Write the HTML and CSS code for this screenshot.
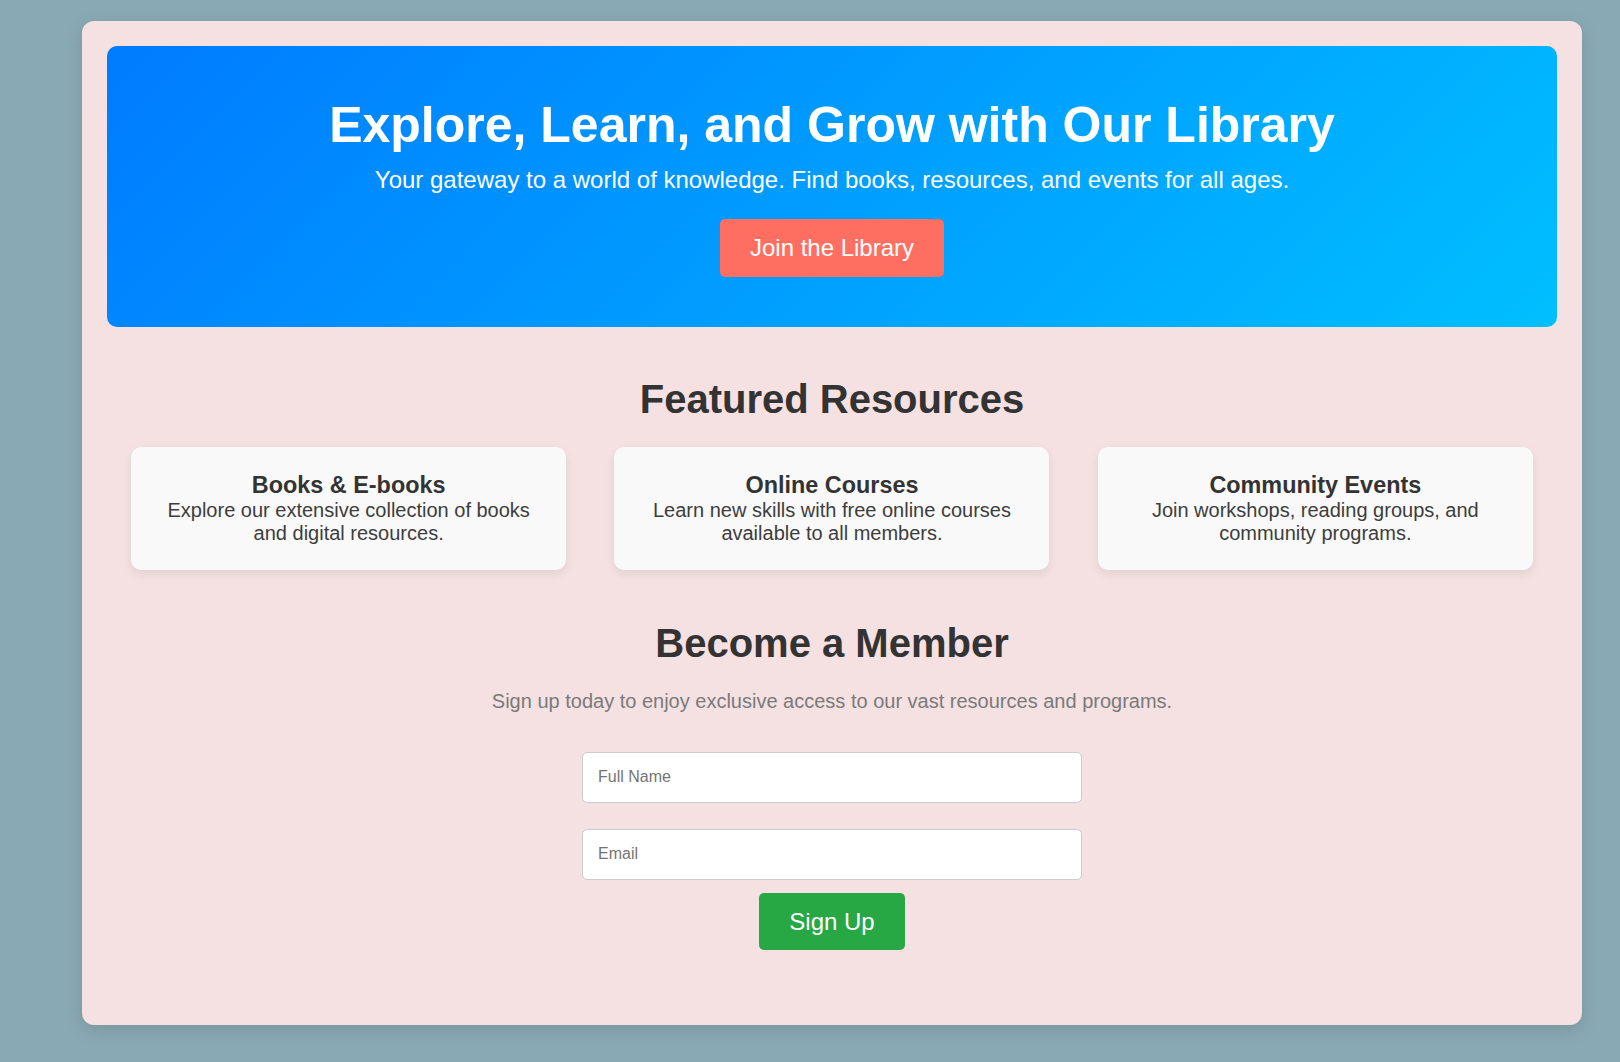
FILE: index.html
```html
<!DOCTYPE html>
<html lang="en">
<head>
<meta charset="utf-8">
<title>Library</title>
<link rel="stylesheet" href="styles.css">
</head>
<body>
<div class="container">
  <header class="hero">
    <h1 class="hero-title">Explore, Learn, and Grow with Our Library</h1>
    <p class="hero-sub">Your gateway to a world of knowledge. Find books, resources, and events for all ages.</p>
    <a class="btn-join" href="#">Join the Library</a>
  </header>

  <section class="featured">
    <h2 class="section-title">Featured Resources</h2>
    <div class="cards">
      <div class="card">
        <h3 class="card-title">Books &amp; E-books</h3>
        <p class="card-text">Explore our extensive collection of books and digital resources.</p>
      </div>
      <div class="card">
        <h3 class="card-title">Online Courses</h3>
        <p class="card-text">Learn new skills with free online courses available to all members.</p>
      </div>
      <div class="card">
        <h3 class="card-title">Community Events</h3>
        <p class="card-text">Join workshops, reading groups, and community programs.</p>
      </div>
    </div>
  </section>

  <section class="member">
    <h2 class="section-title">Become a Member</h2>
    <p class="member-text">Sign up today to enjoy exclusive access to our vast resources and programs.</p>
    <form class="signup">
      <input class="field" type="text" placeholder="Full Name">
      <input class="field field-second" type="email" placeholder="Email">
      <button class="btn-signup" type="button">Sign Up</button>
    </form>
  </section>
</div>
</body>
</html>
```

FILE: styles.css
```css
html, body {
  margin: 0;
  padding: 0;
}

body {
  background: #89a9b4;
  font-family: "Liberation Sans", Arial, sans-serif;
  color: #333;
  min-height: 1062px;
  padding: 21px 0 0 82px;
  box-sizing: border-box;
}

.container {
  width: 1500px;
  box-sizing: border-box;
  background: #f5e1e2;
  border-radius: 12px;
  padding: 25px;
  box-shadow: 0 5px 18px rgba(0, 0, 0, 0.12);
}

.hero {
  background: linear-gradient(135deg, #007bff 0%, #00bfff 100%);
  border-radius: 10px;
  padding: 51px 20px 50px;
  display: flex;
  flex-direction: column;
  align-items: center;
  text-align: center;
  color: #fff;
}

.hero-title {
  margin: 0 0 11px;
  font-size: 50px;
  font-weight: bold;
  line-height: 57.5px;
}

.hero-sub {
  margin: 0 0 26px;
  font-size: 24px;
  line-height: 27.6px;
}

.btn-join {
  display: block;
  background: #ff6f61;
  color: #fff;
  text-decoration: none;
  font-size: 24px;
  line-height: 27.6px;
  padding: 15px 30px;
  border-radius: 5px;
}

.featured {
  margin-top: 49px;
  display: flex;
  flex-direction: column;
  align-items: center;
}

.section-title {
  margin: 0;
  font-size: 40px;
  line-height: 46px;
  font-weight: bold;
  color: #333;
  text-align: center;
}

.cards {
  margin-top: 25px;
  width: 100%;
  display: flex;
  justify-content: space-around;
}

.card {
  width: 30%;
  box-sizing: border-box;
  background: #f9f9f9;
  border-radius: 10px;
  padding: 25px 20px;
  text-align: center;
  box-shadow: 0 4px 10px rgba(0, 0, 0, 0.08);
}

.card-title {
  margin: 0;
  font-size: 23.4px;
  line-height: 26.9px;
  font-weight: bold;
  color: #333;
}

.card-text {
  margin: 0;
  font-size: 20px;
  line-height: 23px;
  color: #3d3d3d;
}

.member {
  margin-top: 50.5px;
  padding-bottom: 50px;
  display: flex;
  flex-direction: column;
  align-items: center;
}

.member-text {
  margin: 23.5px 0 0;
  font-size: 20px;
  line-height: 23px;
  color: #7a7a7a;
}

.signup {
  margin-top: 39px;
  display: flex;
  flex-direction: column;
  align-items: center;
}

.field {
  display: block;
  width: 500px;
  height: 51px;
  box-sizing: border-box;
  padding: 0 15px;
  border: 1px solid #ccc;
  border-radius: 5px;
  background: #fff;
  font-family: "Liberation Sans", Arial, sans-serif;
  font-size: 16px;
  color: #333;
}

.field::placeholder {
  color: #757575;
}

.field-second {
  margin-top: 26px;
}

.btn-signup {
  margin-top: 13px;
  background: #28a745;
  color: #fff;
  border: none;
  border-radius: 5px;
  font-family: "Liberation Sans", Arial, sans-serif;
  font-size: 24px;
  line-height: 27.6px;
  padding: 15px 30px;
  cursor: pointer;
}
```
